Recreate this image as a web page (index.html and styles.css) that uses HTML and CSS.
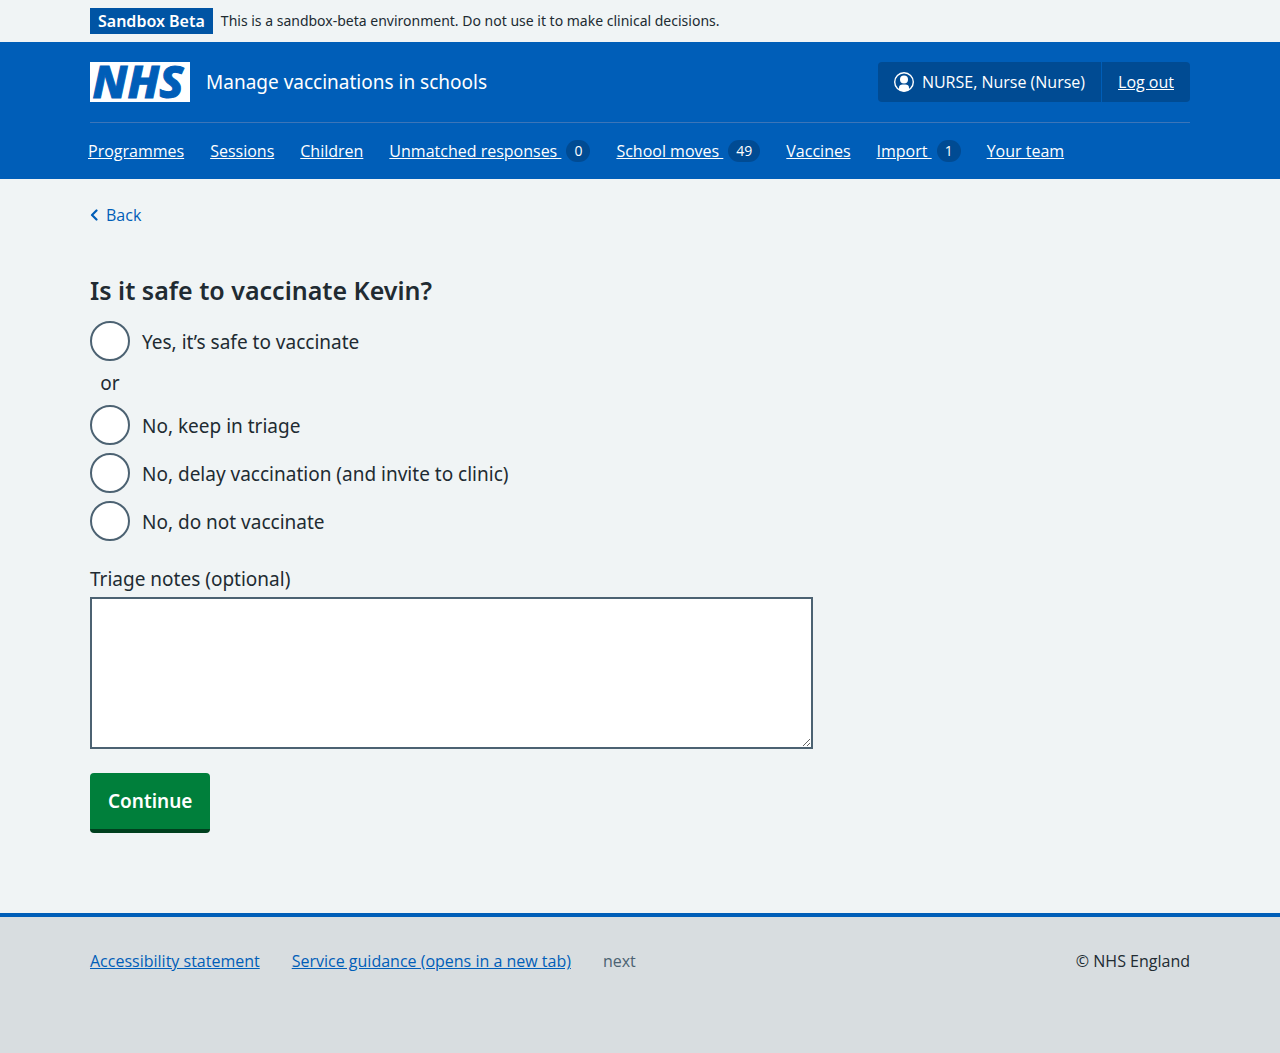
FILE: index.html
```html
<!DOCTYPE html>
<html lang="en">
<head>
<meta charset="utf-8">
<meta name="viewport" content="width=device-width, initial-scale=1">
<title>Is it safe to vaccinate Kevin? – Manage vaccinations in schools</title>
<link rel="stylesheet" href="styles.css">
</head>
<body>
<div class="environment">
  <div class="container environment-inner">
    <strong class="environment-tag">Sandbox Beta</strong>
    <span>This is a sandbox-beta environment. Do not use it to make clinical decisions.</span>
  </div>
</div>

<header class="header">
  <div class="container">
    <div class="header-main">
      <div class="header-service">
        <svg class="logo" viewBox="0 0 100 40" role="img" aria-label="NHS">
          <rect width="100" height="40" fill="#fff"/>
          <text class="logo-text" x="48" y="36" text-anchor="middle">NHS</text>
        </svg>
        <span class="service-name">Manage vaccinations in schools</span>
      </div>
      <div class="account">
        <span class="account-item">
          <svg class="account-icon" viewBox="0 0 20 20" aria-hidden="true">
            <circle cx="10" cy="10" r="9.300" fill="none" stroke="#fff" stroke-width="1.400"/>
            <circle cx="10" cy="7.500" r="4" fill="#fff"/>
            <path d="M5 17.800V15.500C5 13.500 6.500 12.500 8.500 12.500H11.500C13.500 12.500 15 13.500 15 15.500V17.800C12 19.800 8 19.800 5 17.800Z" fill="#fff"/>
          </svg>
          NURSE, Nurse (Nurse)
        </span>
        <a class="account-item account-link" href="#">Log out</a>
      </div>
    </div>
    <nav class="nav" aria-label="Menu">
      <ul class="nav-list">
        <li><a href="#">Programmes</a></li>
        <li><a href="#">Sessions</a></li>
        <li><a href="#">Children</a></li>
        <li><a href="#">Unmatched responses&nbsp;</a><span class="count">0</span></li>
        <li><a href="#">School moves&nbsp;</a><span class="count">49</span></li>
        <li><a href="#">Vaccines</a></li>
        <li><a href="#">Import&nbsp;</a><span class="count">1</span></li>
        <li><a href="#">Your team</a></li>
      </ul>
    </nav>
  </div>
</header>

<div class="container page">
  <a class="back" href="#">
    <svg class="back-icon" viewBox="0 0 8 12" aria-hidden="true"><path d="M6.500 1.500L2 6L6.500 10.500" fill="none" stroke="currentColor" stroke-width="2.200" stroke-linecap="round" stroke-linejoin="round"/></svg>
    Back
  </a>
  <main class="grid">
    <form class="two-thirds">
      <fieldset class="fieldset">
        <legend class="legend"><h1 class="heading">Is it safe to vaccinate Kevin?</h1></legend>
        <div class="radios">
          <div class="radio"><input type="radio" name="status" id="status-yes"><label for="status-yes">Yes, it’s safe to vaccinate</label></div>
          <div class="divider">or</div>
          <div class="radio"><input type="radio" name="status" id="status-triage"><label for="status-triage">No, keep in triage</label></div>
          <div class="radio"><input type="radio" name="status" id="status-delay"><label for="status-delay">No, delay vaccination (and invite to clinic)</label></div>
          <div class="radio"><input type="radio" name="status" id="status-no"><label for="status-no">No, do not vaccinate</label></div>
        </div>
      </fieldset>
      <label class="notes-label" for="notes">Triage notes (optional)</label>
      <textarea class="notes" id="notes" name="notes" rows="5"></textarea>
      <button class="button" type="button">Continue</button>
    </form>
  </main>
</div>

<footer class="footer">
  <div class="container footer-inner">
    <ul class="footer-list">
      <li><a href="#">Accessibility statement</a></li>
      <li><a href="#">Service guidance (opens in a new tab)</a></li>
      <li class="version">next</li>
    </ul>
    <p class="copyright">© NHS England</p>
  </div>
</footer>
</body>
</html>
```
FILE: styles.css
```css
* {
  box-sizing: border-box;
}

body {
  margin: 0;
  min-height: 100vh;
  display: flex;
  flex-direction: column;
  background: #f0f4f5;
  color: #212b32;
  font-family: "Noto Sans", "Open Sans", sans-serif;
  font-size: 19px;
  line-height: 28px;
}

ul {
  margin: 0;
  padding: 0;
  list-style: none;
}

.container {
  width: calc(100% - 64px);
  max-width: 1100px;
  margin: 0 auto;
}

/* Environment banner */
.environment {
  padding: 8px 0;
  font-size: 14px;
  line-height: 26px;
}

.environment-inner {
  display: flex;
  flex-wrap: wrap;
  gap: 8px;
}

.environment-tag {
  padding: 0 8px;
  background: #0054a4;
  color: #fff;
  font-size: 16px;
  font-weight: 600;
}

/* Header */
.header {
  background: #005eb8;
  color: #fff;
}

.header-main {
  display: flex;
  flex-wrap: wrap;
  align-items: center;
  justify-content: space-between;
  gap: 16px;
  padding: 20px 0;
}

.header-service {
  display: flex;
  align-items: center;
  gap: 16px;
}

.logo {
  display: block;
  width: 100px;
  height: 40px;
  overflow: visible;
}

.logo-text {
  fill: #005eb8;
  stroke: #005eb8;
  stroke-width: 1px;
  font-size: 45px;
  font-style: italic;
  font-weight: 800;
}

.account {
  display: flex;
  background: #004b93;
  border-radius: 4px;
  font-family: "Open Sans", "Noto Sans", sans-serif;
  font-size: 16px;
  line-height: 24px;
}

.account-item {
  display: flex;
  align-items: center;
  gap: 8px;
  padding: 8px 16px;
}

.account-link {
  border-left: 1px solid #005eb8;
  color: #fff;
}

.account-icon {
  width: 20px;
  height: 20px;
}

.nav {
  border-top: 1px solid #3c75b8;
}

.nav-list {
  display: flex;
  flex-wrap: wrap;
  margin: 0 -15px;
  font-family: "Open Sans", "Noto Sans", sans-serif;
  font-size: 16px;
  line-height: 24px;
}

.nav-list li {
  display: flex;
  align-items: center;
  gap: 5px;
  padding: 16px 13px;
}

.nav-list a {
  color: #fff;
}

.count {
  min-width: 24px;
  padding: 0 8px;
  border-radius: 12px;
  background: #004b93;
  font-size: 14px;
  line-height: 22px;
  text-align: center;
}

/* Page */
.page {
  flex: 1 0 auto;
  padding: 24px 0 80px;
}

.back {
  display: flex;
  align-items: center;
  gap: 8px;
  width: fit-content;
  color: #005eb8;
  font-family: "Open Sans", "Noto Sans", sans-serif;
  font-size: 16px;
  line-height: 24px;
  text-decoration: none;
}

.back-icon {
  width: 8px;
  height: 12px;
}

.grid {
  display: grid;
  grid-template-columns: repeat(3, 1fr);
  gap: 32px;
  padding-top: 46px;
}

.two-thirds {
  grid-column: span 2;
}

.fieldset {
  margin: 0 0 24px;
  padding: 0;
  border: 0;
}

.legend {
  padding: 0 0 14px;
}

.heading {
  margin: 0;
  font-size: 25px;
  font-weight: 600;
  line-height: 34px;
}

.radios {
  display: flex;
  flex-direction: column;
  gap: 8px;
}

.radio {
  display: flex;
  gap: 12px;
}

.radio input {
  appearance: none;
  flex: none;
  width: 40px;
  height: 40px;
  margin: 0;
  border: 2px solid #4c6272;
  border-radius: 50%;
  background: #fff;
}

.radio input:checked {
  background: radial-gradient(circle, #212b32 10px, #fff 11px);
}

.radio label {
  padding: 7px 0 5px;
}

.divider {
  width: 40px;
  text-align: center;
}

.notes-label {
  display: block;
  margin-bottom: 4px;
}

.notes {
  display: block;
  width: 100%;
  min-height: 152px;
  padding: 4px;
  border: 2px solid #4c6272;
  border-radius: 0;
  background: #fff;
  color: inherit;
  font: inherit;
  resize: vertical;
}

.button {
  display: block;
  margin: 24px 0 0;
  padding: 14px 18px;
  border: 0;
  border-bottom: 4px solid #00401e;
  border-radius: 4px;
  background: #007f3b;
  color: #fff;
  font: inherit;
  font-weight: 600;
}

/* Footer */
.footer {
  padding: 32px 0 80px;
  border-top: 4px solid #005eb8;
  background: #d8dde0;
  font-family: "Open Sans", "Noto Sans", sans-serif;
  font-size: 16px;
  line-height: 24px;
}

.footer-inner,
.footer-list {
  display: flex;
  flex-wrap: wrap;
  gap: 0 32px;
}

.footer-inner {
  justify-content: space-between;
}

.footer a {
  color: #005eb8;
}

.version {
  color: #4c6272;
}

.copyright {
  margin: 0;
}
```
